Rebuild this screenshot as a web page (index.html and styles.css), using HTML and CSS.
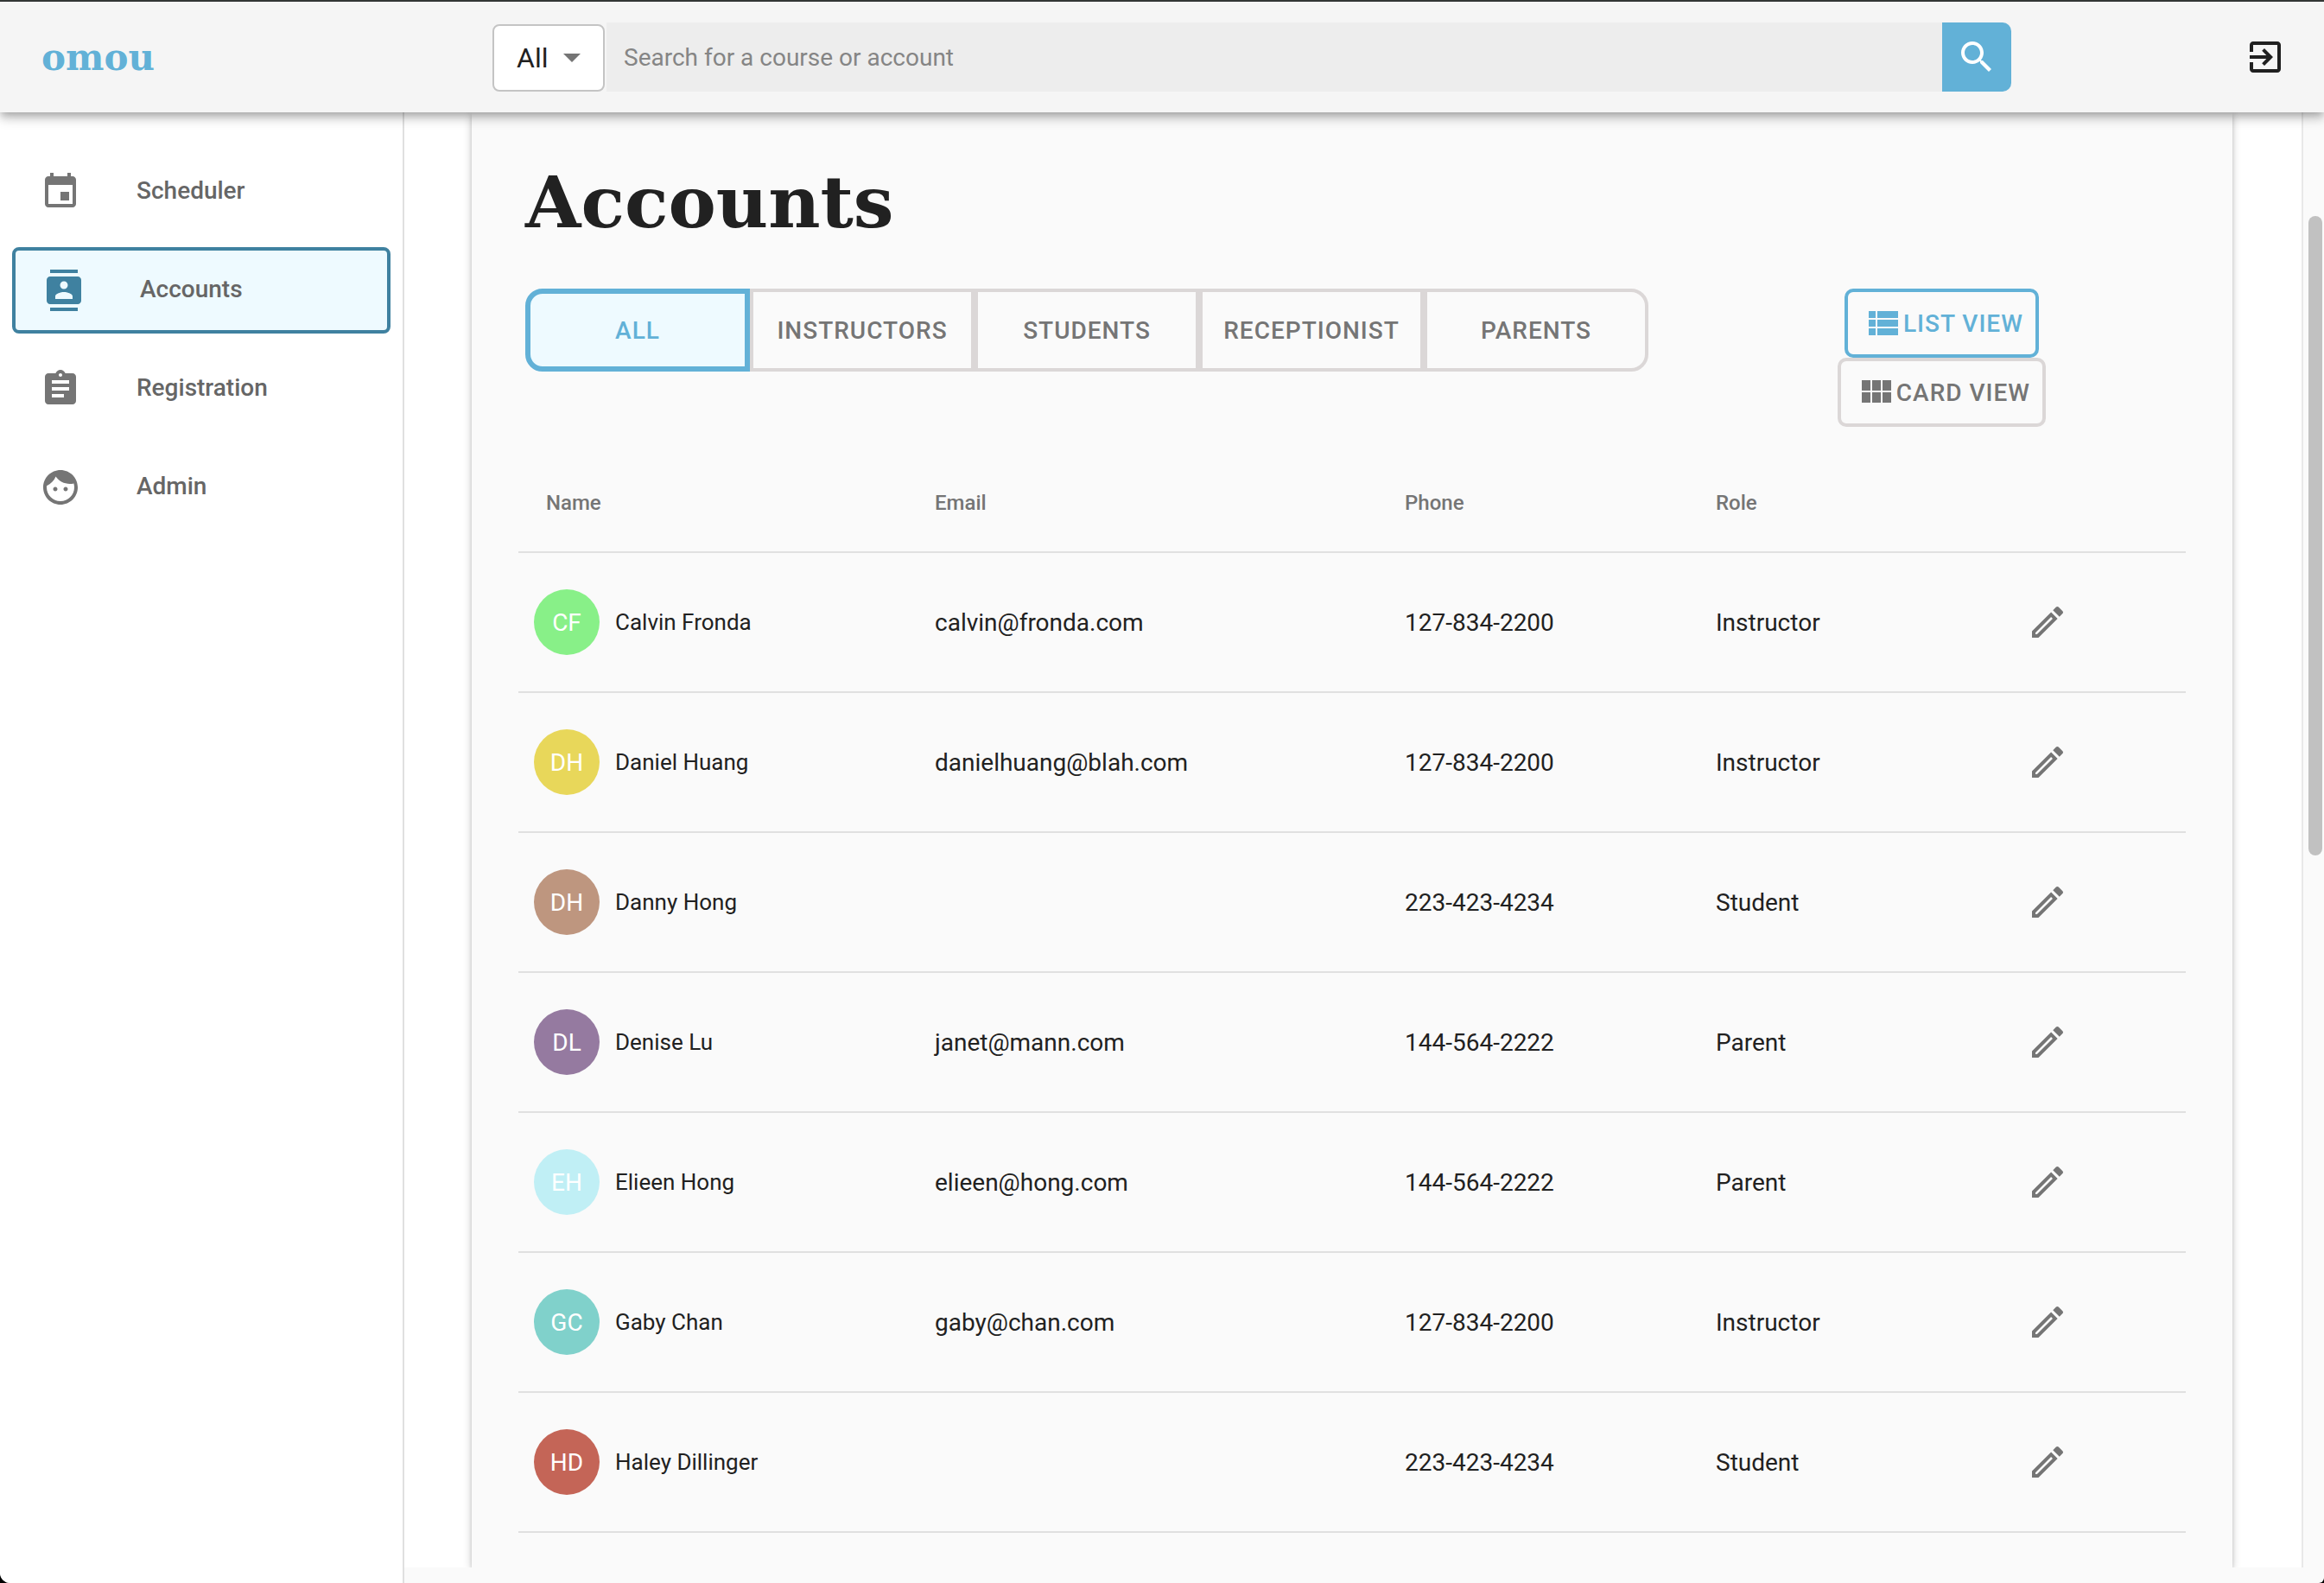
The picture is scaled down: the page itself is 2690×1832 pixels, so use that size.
FILE: index.html
```html
<!DOCTYPE html>
<html lang="en">
<head>
<meta charset="utf-8">
<title>Accounts - omou</title>
<link rel="stylesheet" href="styles.css">
</head>
<body>
<svg class="sprite" aria-hidden="true">
  <symbol id="edit" viewBox="0 0 24 24"><path d="M3 17.25V21h3.75L17.81 9.94l-3.75-3.75L3 17.25zM5.92 19H5v-.92l9.06-9.06.92.92L5.92 19zM20.71 5.63l-2.34-2.34c-.2-.2-.45-.29-.71-.29s-.51.1-.7.29l-1.83 1.83 3.75 3.75 1.83-1.83c.39-.39.39-1.02 0-1.41z"/></symbol>
</svg>
<div class="app">
  <header class="topbar">
    <a class="logo" href="#">omou</a>
    <form class="search">
      <div class="filter">
        <select class="filter-select" aria-label="Search in"><option>All</option><option>Account</option><option>Course</option></select>
        <svg class="icon filter-arrow" viewBox="0 0 24 24"><path d="M7 10l5 5 5-5z"/></svg>
      </div>
      <input class="search-input" type="text" placeholder="Search for a course or account" aria-label="Search">
      <button class="search-button" type="button" aria-label="Search"><svg class="icon" viewBox="0 0 24 24"><path d="M15.5 14h-.79l-.28-.27C15.41 12.59 16 11.11 16 9.5 16 5.91 13.09 3 9.5 3S3 5.91 3 9.5 5.91 16 9.5 16c1.61 0 3.09-.59 4.23-1.57l.27.28v.79l5 4.99L20.49 19l-4.99-5zm-6 0C7.01 14 5 11.99 5 9.5S7.01 5 9.5 5 14 7.01 14 9.5 11.99 14 9.5 14z"/></svg></button>
    </form>
    <button class="logout" type="button" aria-label="Log out"><svg class="icon" viewBox="0 0 24 24"><path d="M10.09 15.59L11.5 17l5-5-5-5-1.41 1.41L12.67 11H3v2h9.67l-2.58 2.59zM19 3H5c-1.11 0-2 .9-2 2v4h2V5h14v14H5v-4H3v4c0 1.1.89 2 2 2h14c1.1 0 2-.9 2-2V5c0-1.1-.9-2-2-2z"/></svg></button>
  </header>

  <div class="body">
    <nav class="sidebar">
      <a class="nav-item" href="#"><svg class="icon" viewBox="0 0 24 24"><path d="M17 12h-5v5h5v-5zM16 1v2H8V1H6v2H5c-1.11 0-1.99.9-1.99 2L3 19c0 1.1.89 2 2 2h14c1.1 0 2-.9 2-2V5c0-1.1-.9-2-2-2h-1V1h-2zm3 18H5V8h14v11z"/></svg><span class="nav-label">Scheduler</span></a>
      <a class="nav-item active" href="#"><svg class="icon" viewBox="0 0 24 24"><path d="M20 0H4v2h16V0zM4 24h16v-2H4v2zM20 4H4c-1.1 0-2 .9-2 2v12c0 1.1.9 2 2 2h16c1.1 0 2-.9 2-2V6c0-1.1-.9-2-2-2zm-8 2.75c1.24 0 2.25 1.01 2.25 2.25s-1.01 2.25-2.25 2.25S9.75 10.24 9.75 9 10.76 6.75 12 6.75zM17 17H7v-1.5c0-1.67 3.33-2.5 5-2.5s5 .83 5 2.5V17z"/></svg><span class="nav-label">Accounts</span></a>
      <a class="nav-item" href="#"><svg class="icon" viewBox="0 0 24 24"><path d="M19 3h-4.18C14.4 1.84 13.3 1 12 1c-1.3 0-2.4.84-2.82 2H5c-1.1 0-2 .9-2 2v14c0 1.1.9 2 2 2h14c1.1 0 2-.9 2-2V5c0-1.1-.9-2-2-2zm-7 0c.55 0 1 .45 1 1s-.45 1-1 1-1-.45-1-1 .45-1 1-1zm2 14H7v-2h7v2zm3-4H7v-2h10v2zm0-4H7V7h10v2z"/></svg><span class="nav-label">Registration</span></a>
      <a class="nav-item" href="#"><svg class="icon" viewBox="0 0 24 24"><path d="M9 11.75c-.69 0-1.25.56-1.25 1.25s.56 1.25 1.25 1.25 1.25-.56 1.25-1.25-.56-1.25-1.25-1.25zm6 0c-.69 0-1.25.56-1.25 1.25s.56 1.25 1.25 1.25 1.25-.56 1.25-1.25-.56-1.25-1.25-1.25zM12 2C6.48 2 2 6.48 2 12s4.48 10 10 10 10-4.48 10-10S17.52 2 12 2zm0 18c-4.41 0-8-3.59-8-8 0-.29.02-.58.05-.86 2.36-1.05 4.23-2.98 5.21-5.37C11.07 8.33 14.05 10 17.42 10c.78 0 1.53-.09 2.25-.26.21.71.33 1.47.33 2.26 0 4.41-3.59 8-8 8z"/></svg><span class="nav-label">Admin</span></a>
    </nav>

    <main class="panel">
      <section class="card">
        <h1 class="title">Accounts</h1>
        <div class="toolbar">
          <div class="tabs">
            <button class="tab selected" type="button">ALL</button>
            <button class="tab" type="button">INSTRUCTORS</button>
            <button class="tab" type="button">STUDENTS</button>
            <button class="tab" type="button">RECEPTIONIST</button>
            <button class="tab" type="button">PARENTS</button>
          </div>
          <div class="views">
            <button class="view selected" type="button"><svg class="icon" viewBox="0 0 24 24"><path d="M4 14h4v-4H4v4zm0 5h4v-4H4v4zM4 9h4V5H4v4zm5 5h12v-4H9v4zm0 5h12v-4H9v4zM9 5v4h12V5H9z"/></svg>LIST VIEW</button>
            <button class="view" type="button"><svg class="icon" viewBox="0 0 24 24"><path d="M4 11h5V5H4v6zm0 7h5v-6H4v6zm6 0h5v-6h-5v6zm6 0h5v-6h-5v6zm-6-7h5V5h-5v6zm6-6v6h5V5h-5z"/></svg>CARD VIEW</button>
          </div>
        </div>
        <table class="accounts">
          <colgroup><col class="col-name"><col class="col-email"><col class="col-phone"><col class="col-role"><col></colgroup>
          <thead>
            <tr><th>Name</th><th>Email</th><th>Phone</th><th>Role</th><th></th></tr>
          </thead>
          <tbody>
            <tr><td><a class="person" href="#"><span class="avatar green">CF</span>Calvin Fronda</a></td><td>calvin@fronda.com</td><td>127-834-2200</td><td>Instructor</td><td><button class="edit" type="button" aria-label="Edit"><svg class="icon"><use href="#edit"/></svg></button></td></tr>
            <tr><td><a class="person" href="#"><span class="avatar yellow">DH</span>Daniel Huang</a></td><td>danielhuang@blah.com</td><td>127-834-2200</td><td>Instructor</td><td><button class="edit" type="button" aria-label="Edit"><svg class="icon"><use href="#edit"/></svg></button></td></tr>
            <tr><td><a class="person" href="#"><span class="avatar brown">DH</span>Danny Hong</a></td><td></td><td>223-423-4234</td><td>Student</td><td><button class="edit" type="button" aria-label="Edit"><svg class="icon"><use href="#edit"/></svg></button></td></tr>
            <tr><td><a class="person" href="#"><span class="avatar purple">DL</span>Denise Lu</a></td><td>janet@mann.com</td><td>144-564-2222</td><td>Parent</td><td><button class="edit" type="button" aria-label="Edit"><svg class="icon"><use href="#edit"/></svg></button></td></tr>
            <tr><td><a class="person" href="#"><span class="avatar ice">EH</span>Elieen Hong</a></td><td>elieen@hong.com</td><td>144-564-2222</td><td>Parent</td><td><button class="edit" type="button" aria-label="Edit"><svg class="icon"><use href="#edit"/></svg></button></td></tr>
            <tr><td><a class="person" href="#"><span class="avatar teal">GC</span>Gaby Chan</a></td><td>gaby@chan.com</td><td>127-834-2200</td><td>Instructor</td><td><button class="edit" type="button" aria-label="Edit"><svg class="icon"><use href="#edit"/></svg></button></td></tr>
            <tr><td><a class="person" href="#"><span class="avatar red">HD</span>Haley Dillinger</a></td><td></td><td>223-423-4234</td><td>Student</td><td><button class="edit" type="button" aria-label="Edit"><svg class="icon"><use href="#edit"/></svg></button></td></tr>
          </tbody>
        </table>
      </section>
    </main>
    <div class="scroll-track"><div class="scroll-thumb"></div></div>
  </div>
</div>
</body>
</html>
```
FILE: styles.css
```css
* { box-sizing: border-box; }

html { background: #000; }

body {
  margin: 0;
  color: #212121;
  font-family: Roboto, "Liberation Sans", sans-serif;
  font-size: 28px;
}

button, input, select { font: inherit; color: inherit; }

button { border: 0; padding: 0; background: none; cursor: pointer; }

a { color: inherit; text-decoration: none; }

.sprite { display: none; }

.icon {
  display: block;
  flex: none;
  width: 48px;
  height: 48px;
  fill: currentColor;
}

.app {
  display: flex;
  flex-direction: column;
  height: 100vh;
  overflow: hidden;
  background: #fafafa;
  border-radius: 0 0 6px 12px;
}

/* Top bar */

.topbar {
  z-index: 1;
  display: flex;
  flex: none;
  align-items: center;
  height: 130px;
  padding: 0 44px 0 48px;
  background: #f5f5f5;
  border-top: 2px solid #333635;
  box-shadow: 0 4px 8px -2px rgba(0, 0, 0, .2), 0 8px 10px rgba(0, 0, 0, .14), 0 2px 20px rgba(0, 0, 0, .12);
}

.logo {
  width: 522px;
  color: #62b1d7;
  font-family: "DejaVu Serif", serif;
  font-size: 42px;
  font-weight: 700;
}

.search {
  display: flex;
  flex: 1;
  height: 80px;
  margin-right: 270px;
}

.filter {
  position: relative;
  width: 130px;
  height: 78px;
  margin: 2px 2px 0 0;
}

.filter-select {
  appearance: none;
  width: 100%;
  height: 100%;
  padding: 0 26px;
  background: #fff;
  border: 2px solid #c4c4c4;
  border-radius: 8px;
  font-size: 32px;
}

.filter-arrow {
  position: absolute;
  top: 14px;
  right: 14px;
  color: #757575;
  pointer-events: none;
}

.search-input {
  flex: 1;
  min-width: 0;
  padding: 0 20px;
  background: #ededed;
  border: 0;
}

.search-input::placeholder { color: #858585; opacity: 1; }

.search-button {
  display: grid;
  place-items: center;
  width: 80px;
  color: #fff;
  background: #62b1d7;
  border-radius: 0 10px 10px 0;
}

.logout { color: #202020; }

/* Layout under the top bar */

.body {
  display: flex;
  flex: 1;
  min-height: 0;
}

.sidebar {
  display: flex;
  flex: none;
  flex-direction: column;
  gap: 14px;
  width: 468px;
  padding: 42px 14px;
  background: #fff;
  border-right: 2px solid #e0e0e0;
}

.nav-item {
  display: flex;
  align-items: center;
  gap: 64px;
  height: 100px;
  padding: 0 32px;
  color: #757575;
  font-weight: 500;
}

.nav-item.active {
  color: #3f81a0;
  background: #eefaff;
  border: 4px solid #3f81a0;
  border-radius: 8px;
}

.nav-label { padding-bottom: 4px; color: #666; }

.panel {
  flex: 1;
  min-width: 0;
  margin-bottom: 18px;
  padding: 0 80px 0 78px;
  overflow: hidden;
  background: #fff;
  border-right: 2px solid #e8e8e8;
}

.card {
  min-height: 100%;
  padding: 40px 54px;
  background: #fafafa;
  box-shadow: 0 2px 10px rgba(0, 0, 0, .2), 0 4px 4px rgba(0, 0, 0, .14);
}

.title {
  margin: 0 8px;
  font-family: "DejaVu Serif", serif;
  font-size: 83px;
  font-weight: 700;
  line-height: 128px;
}

.toolbar {
  display: flex;
  justify-content: space-between;
  align-items: flex-start;
  margin: 36px 8px 32px;
}

.tabs { display: flex; }

.tab {
  width: 260px;
  height: 96px;
  color: #757575;
  border: 4px solid #dbd7d7;
  font-weight: 500;
  letter-spacing: 1px;
}

.tab:first-child { border-radius: 20px 0 0 20px; }

.tab:last-child { border-radius: 0 20px 20px 0; }

.tab.selected {
  color: #62b1d7;
  background: #eefaff;
  border: 6px solid #62b1d7;
}

.views {
  display: flex;
  flex-direction: column;
  align-items: center;
  margin-right: 154px;
}

.view {
  display: flex;
  align-items: center;
  height: 80px;
  padding: 0 14px 0 16px;
  color: #757575;
  border: 4px solid #dbd7d7;
  border-radius: 10px;
  font-weight: 500;
  letter-spacing: 1px;
}

.view.selected { color: #62b1d7; border-color: #62b1d7; }

/* Accounts table */

.accounts {
  width: 100%;
  table-layout: fixed;
  border-collapse: separate;
  border-spacing: 0;
}

.col-name { width: 450px; }
.col-email { width: 544px; }
.col-phone { width: 360px; }
.col-role { width: 360px; }

.accounts th,
.accounts td {
  padding: 0 32px;
  border-bottom: 2px solid #e0e0e0;
  text-align: left;
}

.accounts th {
  height: 114px;
  color: #757575;
  font-size: 24px;
  font-weight: 500;
}

.accounts td { height: 162px; }

.accounts td:first-child { padding: 0 18px; }

.person {
  display: flex;
  align-items: center;
  gap: 18px;
  font-size: 26px;
}

.avatar {
  display: grid;
  place-items: center;
  width: 76px;
  height: 76px;
  border-radius: 50%;
  color: #fff;
  font-size: 28px;
}

.green { background: #88f088; }
.yellow { background: #e8d75a; }
.brown { background: #be967f; }
.purple { background: #957aa0; }
.ice { background: #c0eff5; }
.teal { background: #80d1cb; }
.red { background: #c46557; }

.edit { display: block; color: #757575; }

/* Scrollbar */

.scroll-track {
  flex: none;
  width: 24px;
  padding: 120px 2px 0 6px;
}

.scroll-thumb {
  height: 740px;
  background: #c1c1c1;
  border-radius: 8px;
}
```
